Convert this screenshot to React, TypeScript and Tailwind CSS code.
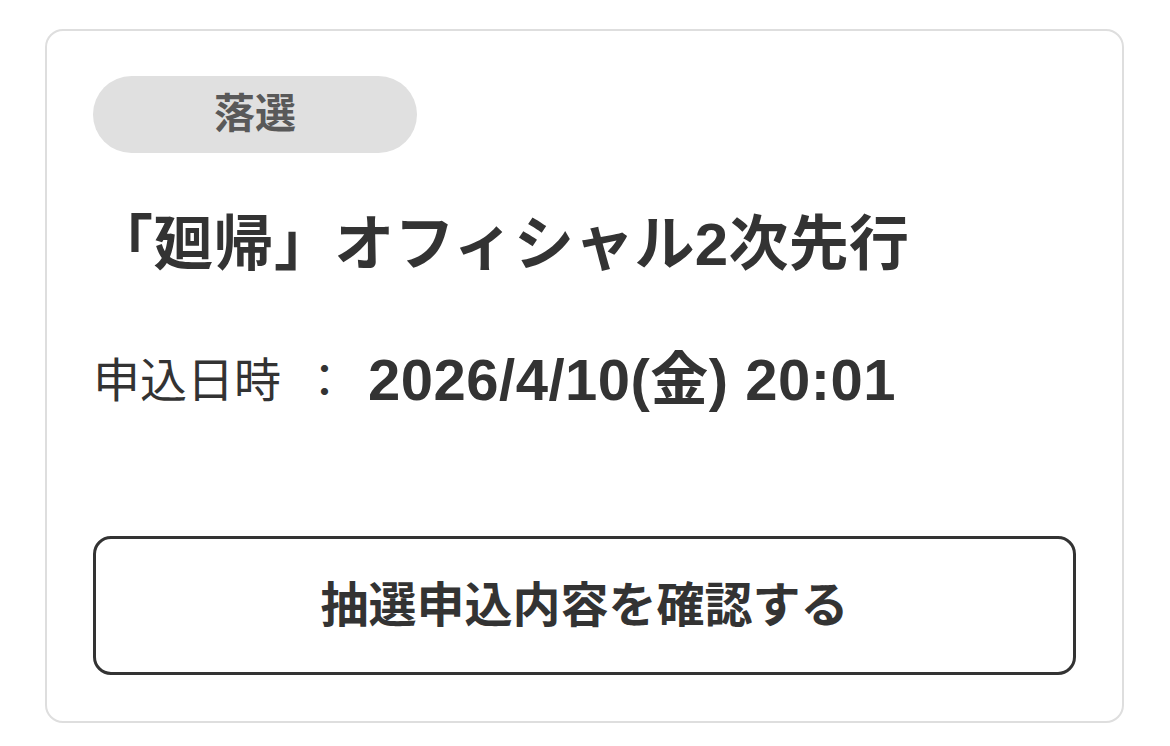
import React from 'react';

const jp = { fontFamily: '"Liberation Sans", "Noto Sans CJK JP", sans-serif' };

const LotteryResultCard = () => {
  return (
    <div className="min-h-screen bg-white pt-[29px] pl-[45px] pr-[46px]" style={jp}>
      <div className="w-[1079px] h-[694px] border-2 border-[#dedede] rounded-[18px] px-[46px] pt-[45px]">
        <div className="w-[324px] h-[77px] rounded-full bg-[#e0e0e0] flex items-center justify-center">
          <span className="text-[41px] font-bold text-[#595959] leading-none">落選</span>
        </div>

        <h2 className="mt-[47px] text-[60px] leading-[90px] font-bold text-[#333333] whitespace-nowrap tracking-[0.3px]">
          「廻帰」オフィシャル2次先行
        </h2>

        <div className="mt-[54px] h-[72px] flex items-center text-[#333333] whitespace-nowrap">
          <span className="text-[47px] leading-none">申込日時</span>
          <span className="text-[47px] leading-none ml-[20px]">：</span>
          <span className="text-[58px] leading-none font-bold ml-[20px] tracking-[0.5px]">2026/4/10(金) 20:01</span>
        </div>

        <button className="mt-[120px] w-full h-[139px] border-[3px] border-[#333333] rounded-[18px] flex items-center justify-center">
          <span className="text-[48px] font-bold text-[#333333] leading-none">抽選申込内容を確認する</span>
        </button>
      </div>
    </div>
  );
};

export default function App() {
  return <LotteryResultCard />;
}
